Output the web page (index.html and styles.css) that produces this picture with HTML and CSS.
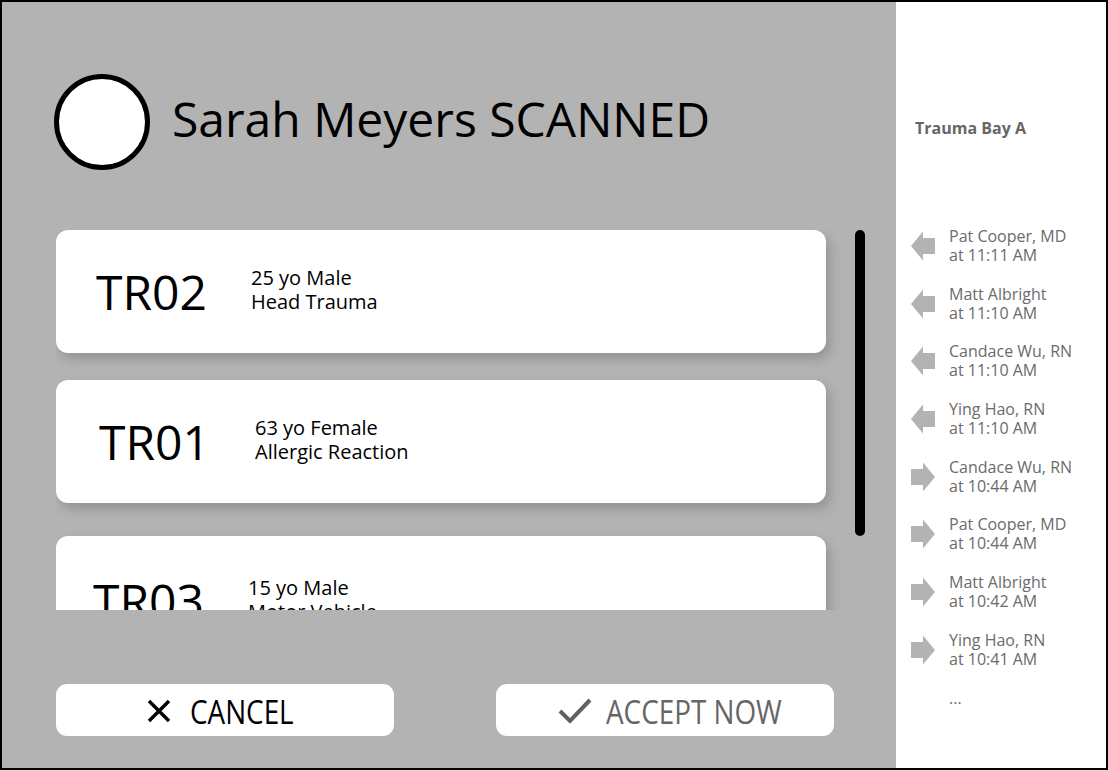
FILE: index.html
```html
<!DOCTYPE html>
<html>
<head>
<meta charset="utf-8">
<link rel="stylesheet" href="styles.css">
</head>
<body>
<div class="frame">
  <main class="main">
    <header class="header">
      <div class="avatar"></div>
      <h1 class="title">Sarah Meyers SCANNED</h1>
    </header>
    <section class="list-row">
      <div class="viewport">
        <div class="card card-a">
          <div class="code">TR02</div>
          <div class="detail">25 yo Male<br>Head Trauma</div>
        </div>
        <div class="card card-b">
          <div class="code">TR01</div>
          <div class="detail">63 yo Female<br>Allergic Reaction</div>
        </div>
        <div class="card card-c">
          <div class="code">TR03</div>
          <div class="detail">15 yo Male<br>Motor Vehicle</div>
        </div>
      </div>
      <div class="scrollbar"></div>
    </section>
    <footer class="actions">
      <button class="btn btn-cancel">
        <svg class="icon-x" width="24" height="24" viewBox="0 0 24 24"><path d="M2 2 L22 22 M22 2 L2 22" stroke="#000" stroke-width="3.4" fill="none"/></svg>
        <span class="btn-label label-cancel">CANCEL</span>
      </button>
      <button class="btn btn-accept">
        <svg class="icon-check" width="34" height="26" viewBox="0 0 34 26"><path d="M2 13 L12 23 L32 2" stroke="#606060" stroke-width="4" fill="none"/></svg>
        <span class="btn-label label-accept">ACCEPT NOW</span>
      </button>
    </footer>
  </main>
  <aside class="side">
    <div class="side-title">Trauma Bay A</div>
    <ul class="log">
      <li class="log-item"><svg class="arrow" width="24" height="30" viewBox="0 0 24 30"><path d="M0 15 L12 0.5 L12 7 L24 7 L24 23 L12 23 L12 29.5 Z" fill="#b3b3b3"/></svg><span>Pat Cooper, MD<br>at 11:11 AM</span></li>
      <li class="log-item"><svg class="arrow" width="24" height="30" viewBox="0 0 24 30"><path d="M0 15 L12 0.5 L12 7 L24 7 L24 23 L12 23 L12 29.5 Z" fill="#b3b3b3"/></svg><span>Matt Albright<br>at 11:10 AM</span></li>
      <li class="log-item"><svg class="arrow" width="24" height="30" viewBox="0 0 24 30"><path d="M0 15 L12 0.5 L12 7 L24 7 L24 23 L12 23 L12 29.5 Z" fill="#b3b3b3"/></svg><span>Candace Wu, RN<br>at 11:10 AM</span></li>
      <li class="log-item"><svg class="arrow" width="24" height="30" viewBox="0 0 24 30"><path d="M0 15 L12 0.5 L12 7 L24 7 L24 23 L12 23 L12 29.5 Z" fill="#b3b3b3"/></svg><span>Ying Hao, RN<br>at 11:10 AM</span></li>
      <li class="log-item"><svg class="arrow" width="24" height="30" viewBox="0 0 24 30"><path d="M24 15 L12 0.5 L12 7 L0 7 L0 23 L12 23 L12 29.5 Z" fill="#b3b3b3"/></svg><span>Candace Wu, RN<br>at 10:44 AM</span></li>
      <li class="log-item"><svg class="arrow" width="24" height="30" viewBox="0 0 24 30"><path d="M24 15 L12 0.5 L12 7 L0 7 L0 23 L12 23 L12 29.5 Z" fill="#b3b3b3"/></svg><span>Pat Cooper, MD<br>at 10:44 AM</span></li>
      <li class="log-item"><svg class="arrow" width="24" height="30" viewBox="0 0 24 30"><path d="M24 15 L12 0.5 L12 7 L0 7 L0 23 L12 23 L12 29.5 Z" fill="#b3b3b3"/></svg><span>Matt Albright<br>at 10:42 AM</span></li>
      <li class="log-item"><svg class="arrow" width="24" height="30" viewBox="0 0 24 30"><path d="M24 15 L12 0.5 L12 7 L0 7 L0 23 L12 23 L12 29.5 Z" fill="#b3b3b3"/></svg><span>Ying Hao, RN<br>at 10:41 AM</span></li>
      <li class="log-item log-more"><span>...</span></li>
    </ul>
  </aside>
</div>
</body>
</html>
```

FILE: styles.css
```css
* { box-sizing: border-box; }
html, body { margin: 0; padding: 0; }
body {
  font-family: "Open Sans", "Liberation Sans", sans-serif;
  width: 1108px;
  height: 770px;
  overflow: hidden;
}
.frame {
  width: 1108px;
  height: 770px;
  border: 2px solid #000;
  display: flex;
}
.main {
  flex: 0 0 894px;
  background: #b3b3b3;
  padding: 72px 0 0 0;
  display: flex;
  flex-direction: column;
}
.header {
  display: flex;
  align-items: center;
  margin-left: 52px;
  height: 96px;
}
.avatar {
  width: 96px;
  height: 96px;
  border-radius: 50%;
  border: 5px solid #000;
  background: #fff;
  flex: none;
}
.title {
  margin: 0 0 0 22px;
  padding-bottom: 7px;
  font-weight: 400;
  font-size: 48px;
  color: #000;
  line-height: 1;
}
.list-row {
  display: flex;
  margin-top: 60px;
  margin-left: 54px;
}
.viewport {
  width: 792px;
  height: 380px;
  overflow: hidden;
  padding-right: 22px;
}
.card {
  height: 123px;
  background: #fff;
  border-radius: 12px;
  box-shadow: 4px 6px 12px rgba(0, 0, 0, 0.18);
  display: flex;
  align-items: center;
  margin-bottom: 27px;
}
.card-b { margin-bottom: 33px; }
.code {
  font-size: 48px;
  line-height: 1;
  color: #000;
  flex: none;
  width: 155px;
}
.card-a .code { margin-left: 40px; }
.card-b .code { margin-left: 43px; width: 156px; }
.card-c .code { margin-left: 37px; margin-top: 6px; }
.detail {
  font-size: 20px;
  line-height: 24px;
  color: #000;
  margin-top: -3px;
}
.card-c .detail { margin-top: 4px; }
.scrollbar {
  width: 10px;
  height: 306px;
  background: #000;
  border-radius: 5px;
  margin-left: 7px;
}
.actions {
  display: flex;
  margin-top: 74px;
  margin-left: 54px;
  gap: 102px;
}
.btn {
  width: 338px;
  height: 52px;
  background: #fff;
  border: none;
  border-radius: 11px;
  display: flex;
  align-items: center;
  justify-content: center;
  padding: 0;
  font-family: "Open Sans", "Liberation Sans", sans-serif;
}
.btn-cancel { padding-right: 12px; }
.btn-accept { padding-left: 10px; }
.btn-label {
  font-size: 32px;
  line-height: 1;
  white-space: nowrap;
  display: inline-block;
  transform: scaleX(0.87);
  transform-origin: left center;
  margin-top: 3px;
}
.label-cancel { color: #000; width: 101px; margin-left: 19px; }
.label-accept { color: #666; width: 176px; margin-left: 14px; }
.icon-x { flex: none; margin-top: 2px; }
.icon-check { flex: none; margin-top: 2px; }
.side {
  flex: 1;
  background: #fff;
  padding-top: 115px;
  color: #6b6b6b;
}
.side-title {
  font-weight: 700;
  font-size: 16px;
  line-height: 22px;
  color: #666;
  padding-left: 19px;
}
.log {
  list-style: none;
  margin: 88px 0 0 0;
  padding: 0 0 0 15px;
  display: flex;
  flex-direction: column;
  gap: 19.7px;
}
.log-item {
  display: flex;
  align-items: center;
  font-size: 16px;
  line-height: 19px;
}
.arrow { flex: none; margin-right: 14px; }
.log-more { padding-left: 38px; height: 19px; }
```
